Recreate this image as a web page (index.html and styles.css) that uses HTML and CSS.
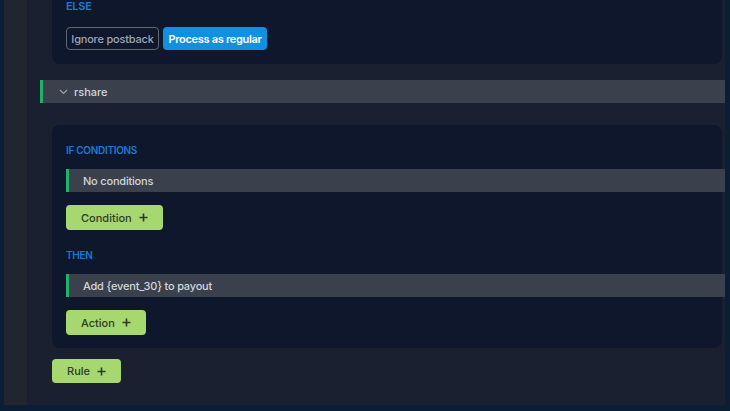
FILE: index.html
```html
<!DOCTYPE html>
<html>
<head>
<meta charset="utf-8">
<link rel="stylesheet" href="styles.css">
</head>
<body>
<div class="frame">
  <div class="sidebar"></div>
  <div class="main">
    <div class="card card-top">
      <div class="label label-else">ELSE</div>
      <div class="btn-row">
        <button class="btn-outline">Ignore postback</button>
        <button class="btn-blue">Process as regular</button>
      </div>
    </div>

    <div class="group-bar">
      <svg class="chev" width="9" height="6" viewBox="0 0 9 6"><polyline points="1,1 4.5,4.5 8,1" fill="none" stroke="#9aa1ab" stroke-width="1.2"/></svg>
      <span>rshare</span>
    </div>

    <div class="card card-rule">
      <div class="label">IF CONDITIONS</div>
      <div class="item-bar">No conditions</div>
      <button class="btn-green">Condition
        <svg width="9" height="9" viewBox="0 0 9 9"><path d="M4.5 0.5v8M0.5 4.5h8" stroke="#2d3a25" stroke-width="1.6"/></svg>
      </button>
      <div class="label label-then">THEN</div>
      <div class="item-bar">Add {event_30} to payout</div>
      <button class="btn-green">Action
        <svg width="9" height="9" viewBox="0 0 9 9"><path d="M4.5 0.5v8M0.5 4.5h8" stroke="#2d3a25" stroke-width="1.6"/></svg>
      </button>
    </div>

    <button class="btn-green btn-rule">Rule
      <svg width="9" height="9" viewBox="0 0 9 9"><path d="M4.5 0.5v8M0.5 4.5h8" stroke="#2d3a25" stroke-width="1.6"/></svg>
    </button>
  </div>
</div>
</body>
</html>
```

FILE: styles.css
```css
* { box-sizing: border-box; }
html, body {
  margin: 0;
  padding: 0;
  background: #0b1e35;
  font-family: Inter, "Noto Sans", sans-serif;
}
.frame {
  display: flex;
  width: 730px;
  height: 411px;
  padding: 0 5px 6px 4px;
  overflow: hidden;
}
.sidebar {
  width: 23px;
  background: #21252e;
  flex: none;
}
.main {
  flex: 1;
  background: #1a2030;
  padding: 0 0 0 13px;
  display: flex;
  flex-direction: column;
  align-items: flex-start;
}
.card {
  background: #0e172c;
  border-radius: 8px;
  margin-left: 12px;
  align-self: stretch;
  margin-right: 3px;
  padding: 0 0 0 14px;
  display: flex;
  flex-direction: column;
  align-items: flex-start;
}
.card-top {
  border-top-left-radius: 0;
  border-top-right-radius: 0;
  padding-top: 1px;
  padding-bottom: 14px;
  height: 64px;
}
.label {
  color: #1d79d6;
  font-size: 10px;
  font-weight: 600;
  line-height: 12px;
  height: 12px;
  letter-spacing: -0.3px;
}
.label-else {
  font-size: 11px;
  margin-top: -2px;
  height: 14px;
  line-height: 14px;
}
.btn-row {
  display: flex;
  gap: 4px;
  margin-top: 14px;
}
button {
  font-family: inherit;
  cursor: pointer;
}
.btn-outline {
  height: 23px;
  width: 93px;
  padding: 0;
  background: transparent;
  border: 1px solid #5f6775;
  border-radius: 4px;
  color: #9ea6b2;
  font-size: 11px;
  font-weight: 500;
  letter-spacing: -0.2px;
}
.btn-blue {
  height: 23px;
  width: 104px;
  padding: 0;
  background: #1190e0;
  border: none;
  border-radius: 4px;
  color: #ffffff;
  font-size: 11px;
  font-weight: 600;
  letter-spacing: -0.3px;
}
.group-bar {
  align-self: stretch;
  margin-top: 16px;
  height: 23px;
  background: #3a414c;
  border-left: 3px solid #20b26b;
  display: flex;
  align-items: center;
  padding-left: 16px;
  gap: 6px;
  color: #d2d6dc;
  font-size: 11px;
  font-weight: 500;
}
.chev { margin-top: 1px; }
.card-rule {
  margin-top: 22px;
  height: 223px;
  padding-top: 19px;
}
.item-bar {
  align-self: stretch;
  margin-right: -3px;
  margin-top: 13px;
  height: 23px;
  background: #3a414c;
  border-left: 3px solid #20b26b;
  display: flex;
  align-items: center;
  padding-left: 14px;
  color: #d2d6dc;
  font-size: 11px;
  font-weight: 500;
  letter-spacing: -0.2px;
}
.btn-green {
  margin-top: 13px;
  height: 25px;
  padding: 0 15px;
  background: #a7d86f;
  border: none;
  border-radius: 4px;
  color: #2f3b28;
  font-size: 11px;
  font-weight: 500;
  display: inline-flex;
  align-items: center;
  gap: 7px;
}
.label-then {
  margin-top: 19px;
}
.btn-rule {
  margin-top: 11px;
  margin-left: 12px;
  height: 24px;
}
```
